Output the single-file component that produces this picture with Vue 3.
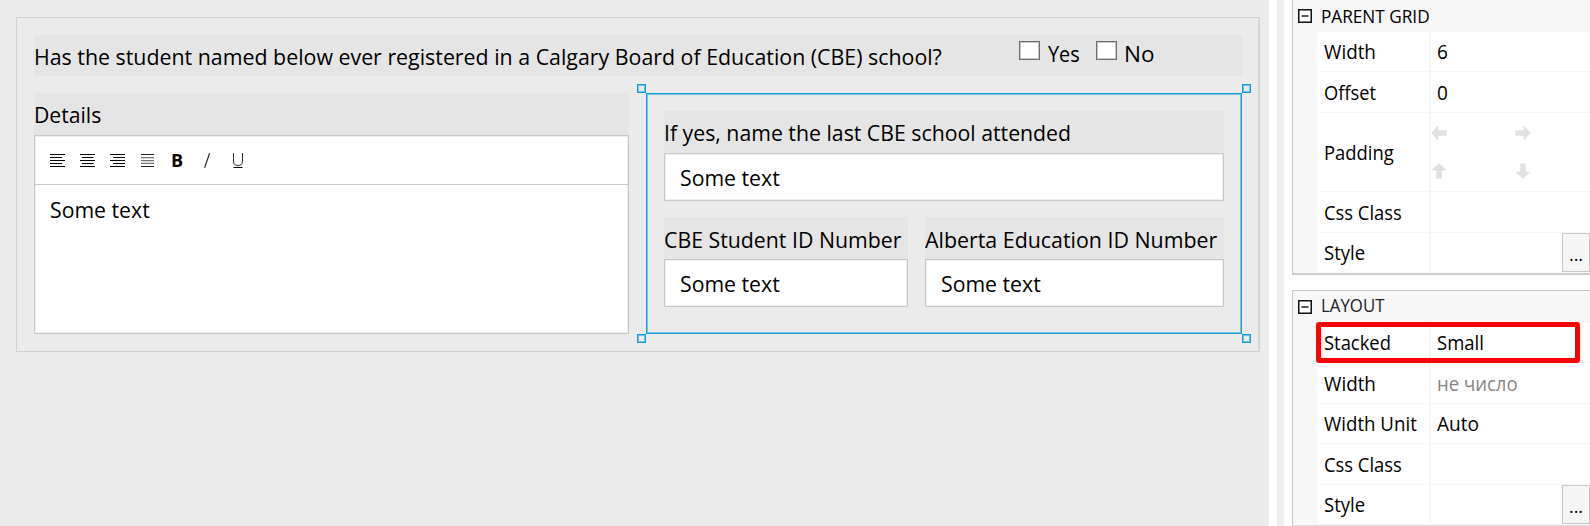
<script setup>
const squeeze = (k) => ({ transform: `scaleX(${k})` })

const alignIcons = [
  { name: 'left', x: 0, w: 15, sx: 0, sw: 12 },
  { name: 'center', x: 0, w: 15, sx: 2, sw: 11.5 },
  { name: 'right', x: 0, w: 15, sx: 3, sw: 12 },
]
const lineTops = [0, 3, 6, 9, 12]

const gridRows = [
  { label: 'Width', k: 0.941, value: '6', vk: 0.95, h: 40 },
  { label: 'Offset', k: 0.913, value: '0', vk: 0.95, h: 41 },
  { label: 'Padding', k: 0.92, arrows: true, h: 79 },
  { label: 'Css Class', k: 0.918, value: '', h: 41 },
  { label: 'Style', k: 0.925, value: '', button: true, h: 40 },
]
const layoutRows = [
  { label: 'Stacked', k: 0.92, value: 'Small', vk: 0.925, h: 40 },
  { label: 'Width', k: 0.941, value: 'не число', vk: 0.926, muted: true, h: 41 },
  { label: 'Width Unit', k: 0.934, value: 'Auto', vk: 0.955, h: 40 },
  { label: 'Css Class', k: 0.918, value: '', h: 41 },
  { label: 'Style', k: 0.925, value: '', button: true, h: 40 },
]
const panels = [
  { id: 'grid', title: 'PARENT GRID', k: 0.955, rows: gridRows },
  { id: 'layout', title: 'LAYOUT', k: 0.934, rows: layoutRows },
]
const arrows = [0, 180, 90, 270]
</script>

<template>
  <div class="page">
    <main class="canvas">
      <div class="frame">
        <div class="question">
          <span class="t" :style="squeeze(0.949)">Has the student named below ever registered in a Calgary Board of Education (CBE) school?</span>
          <div class="checks">
            <i class="box"></i><span class="t yes" :style="squeeze(0.88)">Yes</span>
            <i class="box second"></i><span class="t no" :style="squeeze(1)">No</span>
          </div>
        </div>
        <div class="columns">
          <section class="details">
            <div class="label"><span class="t" :style="squeeze(0.94)">Details</span></div>
            <div class="editor">
              <div class="toolbar">
                <svg v-for="a in alignIcons" :key="a.name" class="align" width="15" height="13" viewBox="0 0 15 13">
                  <rect v-for="(y, i) in lineTops" :key="y" :x="i % 2 ? a.sx : a.x" :y="y" :width="i % 2 ? a.sw : a.w" height="1" />
                </svg>
                <svg class="align justify" width="15" height="13" viewBox="0 0 15 13">
                  <path fill="#222" d="M1 0h13v1H1zM1 12h13v1H1z" />
                  <path fill="#777" d="M1 3h13v1H1zM1 6h13v1H1zM1 9h13v1H1z" />
                  <path fill="#c4c4c4" d="M1 4h13v1H1zM1 7h13v1H1zM1 8h13v1H1z" opacity=".6" />
                </svg>
                <b class="bold">B</b>
                <svg class="italic" width="8" height="15" viewBox="0 0 8 15"><path d="M6.6 0.3L1.6 14.7" stroke="#222" stroke-width="1.1" /></svg>
                <svg class="under" width="12" height="15" viewBox="0 0 12 15"><path d="M1.5 0v8.2q0 4.3 4.5 4.3t4.5-4.3V0" fill="none" stroke="#333" stroke-width="1" /><path d="M1.5 14.5h9" stroke="#000" /></svg>
              </div>
              <div class="body"><span class="t" :style="squeeze(0.944)">Some text</span></div>
            </div>
          </section>
          <section class="selected">
            <i class="handle tl"></i><i class="handle tr"></i><i class="handle bl"></i><i class="handle br"></i>
            <div class="label"><span class="t" :style="squeeze(0.945)">If yes, name the last CBE school attended</span></div>
            <div class="input"><span class="t" :style="squeeze(0.944)">Some text</span></div>
            <div class="pair">
              <div class="first">
                <div class="label low"><span class="t" :style="squeeze(0.946)">CBE Student ID Number</span></div>
                <div class="input"><span class="t" :style="squeeze(0.944)">Some text</span></div>
              </div>
              <div class="other">
                <div class="label low alt"><span class="t" :style="squeeze(0.95)">Alberta Education ID Number</span></div>
                <div class="input"><span class="t" :style="squeeze(0.944)">Some text</span></div>
              </div>
            </div>
          </section>
        </div>
      </div>
    </main>
    <div class="splitter"></div>
    <aside class="side">
      <section v-for="p in panels" :key="p.id" class="panel" :class="p.id">
        <header>
          <svg width="14" height="14" viewBox="0 0 14 14"><rect x="0.75" y="0.75" width="12.5" height="12.5" fill="#fff" stroke="#111" stroke-width="1.5" /><path d="M3.5 7h7" stroke="#111" stroke-width="1.4" /></svg>
          <span class="t" :style="squeeze(p.k)">{{ p.title }}</span>
        </header>
        <div class="rows">
          <div v-for="r in p.rows" :key="r.label" class="row" :style="{ height: r.h + 'px' }">
            <div class="name"><span class="t" :style="squeeze(r.k)">{{ r.label }}</span></div>
            <div v-if="r.arrows" class="value arrows">
              <svg v-for="d in arrows" :key="d" width="16" height="16" viewBox="0 0 16 16"><path :transform="`rotate(${d} 8 8)`" d="M0.3 8L7.3 0.3V5.2H15.5V10.8H7.3V15.7Z" fill="#e0e0e0" /></svg>
            </div>
            <div v-else class="value" :class="{ muted: r.muted }">
              <span v-if="r.value" class="t" :style="squeeze(r.vk)">{{ r.value }}</span>
              <button v-if="r.button">...</button>
            </div>
          </div>
        </div>
        <div v-if="p.id === 'layout'" class="highlight"></div>
      </section>
    </aside>
  </div>
</template>

<style>
html, body { overflow: hidden; }
</style>
<style scoped>
.page, .page * { box-sizing: border-box; }
.page { display: flex; width: 1590px; height: 526px; overflow: hidden; background: #fff; font-family: "Open Sans", "Noto Sans", sans-serif; font-size: 22.5px; color: #000; }
.t { display: inline-block; white-space: nowrap; transform-origin: 0 50%; }
.canvas { width: 1269px; background: #ebebeb; padding: 17px 9px 0 16px; flex: none; }
.frame { height: 335px; border: 1px solid #d0d0d0; border-right: 2px solid #d5d5d5; padding: 17px 16px 0 17px; }
.question { display: flex; height: 41px; width: 1208px; background: #e5e5e5; line-height: 44px; }
.question > .t { margin-left: -0.5px; width: 956.5px; flex: none; }
.checks { display: flex; margin-left: 29px; line-height: 38px; }
.box { flex: none; width: 21px; height: 19px; margin-top: 6px; background: #fff; border: 1px solid #6d6d6d; box-shadow: inset 0 0 0 1px #c9c9c9; }
.yes { width: 36px; margin-left: 8px; }
.second { margin-left: 12px; }
.no { margin-left: 7px; }
.columns { display: flex; margin-top: 17px; }
.details { flex: none; width: 595px; margin-right: 17px; }
.label { height: 42px; line-height: 44px; background: #e5e5e5; }
.label .t { margin-left: -0.5px; }
.label.low { line-height: 46px; }
.label.alt .t { margin-left: 0; }
.editor { height: 199px; background: #fff; border: 1px solid #c8c8c8; box-shadow: inset 0 0 0 1px #eee; }
.toolbar { display: flex; align-items: flex-start; height: 49px; border-bottom: 1px solid #c8c8c8; padding: 18px 0 0 15px; }
.align { display: block; margin-right: 15px; flex: none; }
.justify { margin-right: 16px; }
.bold { font-size: 18px; line-height: 18px; width: 12px; height: 18px; margin-top: -3px; }
.italic { display: block; margin: -1px 0 0 20px; }
.under { display: block; margin: -1px 0 0 21px; }
.body { padding: 8px 0 0 15px; line-height: 34px; }
.selected { position: relative; flex: none; width: 596px; height: 241px; border: 1px solid #149dda; box-shadow: inset 0 0 0 1px #7fc3e2; padding: 17px; }
.handle { position: absolute; width: 9px; height: 9px; border: 1px solid #149dda; box-shadow: inset 0 0 0 1px #6fc0e6; }
.tl { left: -10px; top: -10px; }
.tr { right: -10px; top: -10px; }
.bl { left: -10px; bottom: -10px; }
.br { right: -10px; bottom: -10px; }
.input { position: relative; height: 48px; line-height: 48px; background: #fff; border: 1px solid #c8c8c8; box-shadow: inset 0 0 0 1px #eee; padding-left: 15px; }
.pair { display: flex; gap: 17px; margin-top: 16px; }
.first { flex: none; width: 244px; }
.other { flex: 1; min-width: 0; }
.splitter { width: 7px; margin: 0 8px; background: #efefef; flex: none; }
.side { width: 298px; flex: none; font-size: 20px; }
.panel { position: relative; border: 1px solid #c8c8c8; border-right: 0; background: #f7f7f7; }
.panel.grid { height: 275px; border-top: 0; border-bottom: 2px solid #cdcdcd; }
.panel.layout { height: 236px; margin-top: 15px; border-bottom-color: #ddd; }
header { display: flex; height: 32px; padding-left: 5px; font-size: 18px; line-height: 32px; }
header svg { display: block; margin-top: 9px; margin-right: 9px; }
.layout header { line-height: 28px; }
.layout header .t { color: #222; }
.rows { margin-left: 24px; }
.row { display: flex; gap: 2px; padding-bottom: 1px; }
.name { display: flex; flex: none; align-items: center; width: 112px; background: #fff; padding-left: 7px; line-height: 39px; }
.value { display: flex; align-items: center; flex: 1; min-width: 0; background: #fff; padding-left: 5.5px; }
.muted { color: #848484; }
.value button { margin: 0 0 0 auto; align-self: stretch; width: 28px; padding: 3px 0 0; font: 18px/30px "Open Sans", sans-serif; color: #000; background: #f5f5f5; border: 1px solid #c8c8c8; }
.arrows { display: grid; grid-template-columns: 84px 84px; grid-template-rows: 38px 38px; align-content: start; align-items: start; padding: 12px 0 0; }
.arrows svg { display: block; }
.highlight { position: absolute; left: 23px; top: 31px; width: 264px; height: 41px; border: 5px solid #f00; border-radius: 3px; }
</style>
